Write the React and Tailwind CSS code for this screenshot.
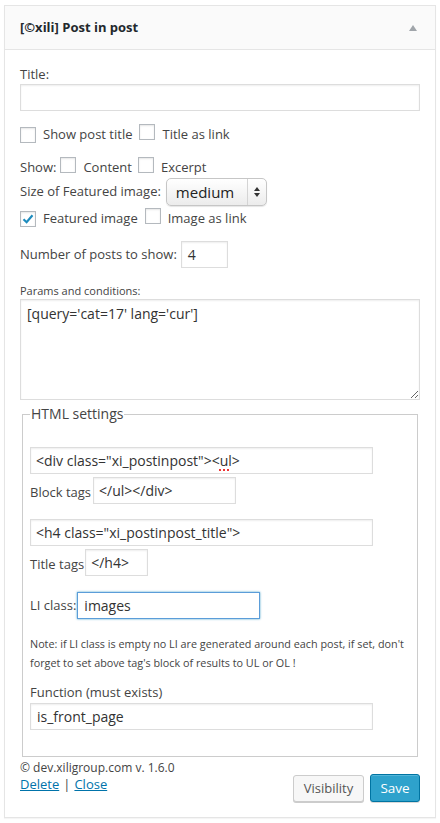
import React from "react";

function Box({ checked }) {
  return (
    <span className="inline-flex w-[16px] h-[16px] shrink-0 items-center justify-center border border-[#b4b9be] bg-white shadow-[inset_0_1px_2px_rgba(0,0,0,0.1)]">
      {checked && (
        <svg width="14" height="14" viewBox="0 0 14 14">
          <path d="M2.5 7.2 L5.6 10.2 L11.5 3.2" fill="none" stroke="#1e8cbe" strokeWidth="2.2" />
        </svg>
      )}
    </span>
  );
}

function Input({ className = "", children, focus }) {
  return (
    <div
      className={
        "h-[27px] border bg-white flex items-center pl-[5px] text-[14px] text-[#333] " +
        (focus
          ? "border-[#5b9dd9] shadow-[0_0_2px_rgba(30,140,190,0.8)] "
          : "border-[#ddd] shadow-[inset_0_1px_2px_rgba(0,0,0,0.07)] ") +
        className
      }
    >
      {children}
    </div>
  );
}

export default function App() {
  return (
    <div className="w-[440px] h-[823px] bg-white pt-[5px] pl-[4px] font-['Open_Sans',sans-serif] text-[13px] text-[#444]">
      <div className="w-[432px] border border-[#e5e5e5] shadow-[0_1px_1px_rgba(0,0,0,0.04)]">
        <div className="h-[44px] bg-[#fafafa] border-b border-[#e5e5e5] flex items-center justify-between pl-[15px] pr-[18px]">
          <span className="font-bold text-[13px] text-[#23282d]">[©xili] Post in post</span>
          <svg width="8" height="6" viewBox="0 0 8 6" className="mt-[1px]">
            <path d="M0 6 L4 0 L8 6 Z" fill="#a0a5aa" />
          </svg>
        </div>

        <div className="px-[15px] pb-[15px] flex flex-col">
          <div className="mt-[15px] leading-[18px]">Title:</div>
          <Input className="mt-[1px]" />

          <div className="mt-[16px] h-[16px] flex items-center">
            <Box />
            <span className="ml-[7px]">Show post title</span>
            <span className="ml-[7px]"><Box /></span>
            <span className="ml-[7px]">Title as link</span>
          </div>

          <div className="mt-[17px] h-[16px] flex items-center">
            <span>Show:</span>
            <span className="ml-[4px]"><Box /></span>
            <span className="ml-[7px]">Content</span>
            <span className="ml-[6px]"><Box /></span>
            <span className="ml-[7px]">Excerpt</span>
          </div>

          <div className="mt-[2px] h-[28px] flex items-center">
            <span>Size of Featured image:</span>
            <div className="ml-[5px] w-[101px] h-[28px] rounded-[5px] border border-[#c6c6c6] bg-gradient-to-b from-white to-[#ececec] shadow-[0_1px_1px_rgba(0,0,0,0.1)] flex items-center">
              <span className="pl-[9px] text-[15px] text-[#222] flex-1">medium</span>
              <span className="w-px h-[26px] bg-[#d4d4d4]" />
              <span className="w-[18px] flex flex-col items-center gap-[2px]">
                <svg width="6" height="4" viewBox="0 0 6 4"><path d="M0 4 L3 0 L6 4 Z" fill="#333" /></svg>
                <svg width="6" height="4" viewBox="0 0 6 4"><path d="M0 0 L3 4 L6 0 Z" fill="#333" /></svg>
              </span>
            </div>
          </div>

          <div className="mt-[5px] h-[16px] flex items-center">
            <Box checked />
            <span className="ml-[7px]">Featured image</span>
            <span className="ml-[7px]"><Box /></span>
            <span className="ml-[7px]">Image as link</span>
          </div>

          <div className="mt-[14px] flex items-center">
            <span>Number of posts to show:</span>
            <Input className="ml-[4px] w-[47px] pl-[6px]">4</Input>
          </div>

          <div className="mt-[16px] text-[11px] leading-[14px]">Params and conditions:</div>
          <textarea
            readOnly
            defaultValue="[query='cat=17' lang='cur']"
            className="mt-[1px] w-[400px] h-[101px] border border-[#ddd] px-[6px] py-[3px] text-[14px] text-[#333] font-['Open_Sans',sans-serif] shadow-[inset_0_1px_2px_rgba(0,0,0,0.07)] outline-none"
          />

          <fieldset className="mt-[5px] mx-[2px] border border-[#ccc] pl-[7px] pr-[7px] pt-[24px] pb-[26px]">
            <legend className="px-[1px] text-[14px] leading-[18px]">HTML settings</legend>
            <Input className="w-[343px]">
              <span>
                &lt;div class="xi_postinpost"&gt;&lt;
                <span className="underline decoration-dotted decoration-[#e33] decoration-2 underline-offset-[3px]">ul</span>
                &gt;
              </span>
            </Input>
            <div className="mt-[3px] flex items-center">
              <span className="mt-[4px]">Block tags</span>
              <Input className="ml-[2px] w-[143px]">&lt;/ul&gt;&lt;/div&gt;</Input>
            </div>

            <Input className="mt-[15px] w-[343px]">&lt;h4 class="xi_postinpost_title"&gt;</Input>
            <div className="mt-[3px] flex items-center">
              <span className="mt-[4px]">Title tags</span>
              <Input className="ml-[1px] w-[63px]">&lt;/h4&gt;</Input>
            </div>

            <div className="mt-[16px] flex items-center">
              <span>LI class:</span>
              <Input focus className="ml-[1px] w-[183px] text-[14.5px] pl-[6px]">images</Input>
            </div>

            <p className="mt-[15px] text-[10.8px] leading-[19px]">
              Note: if LI class is empty no LI are generated around each post, if set, don't forget to set above tag's block of results to UL or OL !
            </p>

            <div className="mt-[11px] text-[13px] leading-[18px]">Function (must exists)</div>
            <Input className="mt-[2px] w-[343px] pl-[6px]">is_front_page</Input>
          </fieldset>

          <div className="flex justify-between items-start mt-[3px]">
            <div className="flex flex-col">
              <span className="text-[12px] leading-[15px]">© dev.xiligroup.com v. 1.6.0</span>
              <span className="text-[13px] leading-[18px]">
                <a className="text-[#0073aa] underline">Delete</a>
                <span className="mx-[4px]">|</span>
                <a className="text-[#0073aa] underline">Close</a>
              </span>
            </div>
            <div className="flex gap-[6px] mt-[15px]">
              <button className="h-[27px] w-[71px] rounded-[3px] border border-[#ccc] bg-[#f7f7f7] text-[13px] text-[#555] shadow-[0_1px_0_#ccc]">Visibility</button>
              <button className="h-[28px] w-[50px] -mt-[1px] rounded-[3px] border border-[#0074a2] bg-[#2ea2cc] text-[13.5px] text-white shadow-[inset_0_1px_0_rgba(120,200,230,0.5),0_1px_0_rgba(0,0,0,0.15)]">Save</button>
            </div>
          </div>
        </div>
      </div>
    </div>
  );
}
